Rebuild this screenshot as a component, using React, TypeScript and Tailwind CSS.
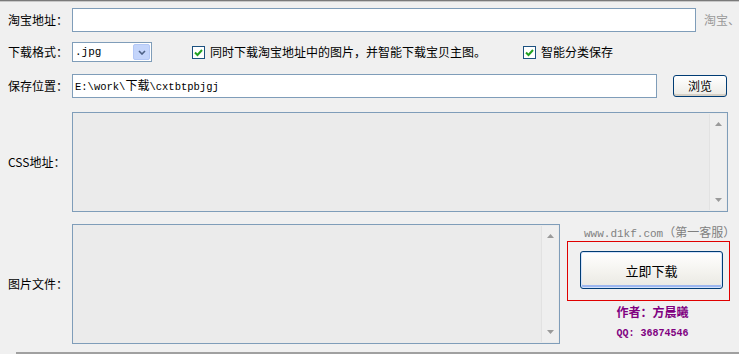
import React from 'react';

const cjk = "font-['Noto_Sans_CJK_SC','Noto_Sans',sans-serif]";
const mono = "font-['Liberation_Mono','Noto_Sans_CJK_SC',monospace]";

const Check: React.FC = () => (
  <div className="w-[13px] h-[13px] border border-[#1c5180] bg-white flex items-center justify-center shrink-0">
    <svg width="9" height="9" viewBox="0 0 9 9">
      <path d="M1 4.5 L3.5 7 L8 2" fill="none" stroke="#21a121" strokeWidth="2" />
    </svg>
  </div>
);

const Label: React.FC<{ text: string }> = ({ text }) => (
  <div className={`w-[72px] pl-[8px] shrink-0 text-[12px] leading-none text-black ${cjk}`}>{text}</div>
);

const ScrollStrip: React.FC = () => (
  <div className="w-[17px] h-full bg-[#efefef] border-l border-[#e2e2e2] flex flex-col items-center justify-between py-[8px]">
    <svg width="7" height="4" viewBox="0 0 7 4"><path d="M0 4 L3.5 0 L7 4 Z" fill="#9a9a9a" /></svg>
    <svg width="7" height="4" viewBox="0 0 7 4"><path d="M0 0 L7 0 L3.5 4 Z" fill="#9a9a9a" /></svg>
  </div>
);

export default function App() {
  return (
    <div className={`w-[739px] h-[354px] bg-[#f0f0f0] overflow-hidden flex flex-col ${cjk}`}>
      <div className="h-[1px] bg-[#7a7a7a]" />
      <div className="h-[1px] bg-[#c8c8c8]" />

      {/* 淘宝地址 */}
      <div className="flex items-center mt-[6px] h-[24px]">
        <Label text="淘宝地址：" />
        <div className="w-[624px] h-[24px] bg-white border border-[#7f9db9] shrink-0" />
        <span className="ml-[8px] text-[12px] text-[#9a9a9a] whitespace-nowrap">淘宝、</span>
      </div>

      {/* 下载格式 */}
      <div className="flex items-center mt-[10px] h-[20px]">
        <Label text="下载格式：" />
        <div className="w-[80px] h-[20px] bg-white border border-[#7f9db9] flex items-center justify-between pl-[2px] pr-[1px] shrink-0">
          <span className={`text-[11px] leading-none text-black ${mono}`}>.jpg</span>
          <div className="w-[17px] h-[16px] bg-[#c4d5fb] border border-[#b4c8f6] rounded-[2px] flex items-center justify-center">
            <svg width="8" height="5" viewBox="0 0 8 5"><path d="M1 1 L4 4 L7 1" fill="none" stroke="#4d6185" strokeWidth="1.6" /></svg>
          </div>
        </div>
        <div className="ml-[40px] flex items-center gap-[5px]">
          <Check />
          <span className="text-[12px] leading-none text-black whitespace-nowrap">同时下载淘宝地址中的图片，并智能下载宝贝主图。</span>
        </div>
        <div className="ml-[37px] flex items-center gap-[5px]">
          <Check />
          <span className="text-[12px] leading-none text-black whitespace-nowrap">智能分类保存</span>
        </div>
      </div>

      {/* 保存位置 */}
      <div className="flex items-center mt-[12px] h-[24px]">
        <Label text="保存位置：" />
        <div className="w-[585px] h-[24px] bg-white border border-[#7f9db9] flex items-center pl-[2px] shrink-0">
          <span className={`text-[10.5px] leading-none text-black whitespace-nowrap ${mono}`}>E:\work\<span className={`text-[12px] ${cjk}`}>下载</span>\cxtbtpbjgj</span>
        </div>
        <button className="ml-[16px] w-[54px] h-[22px] rounded-[3px] border border-[#003c74] bg-gradient-to-b from-white to-[#ecebe6] shadow-[inset_0_-2px_0_#d6d0c5] text-[12px] text-black leading-none flex items-center justify-center">
          浏览
        </button>
      </div>

      {/* CSS地址 */}
      <div className="flex items-center mt-[14px] h-[100px]">
        <Label text="CSS地址：" />
        <div className="w-[656px] h-[100px] bg-[#ebebeb] border border-[#7f9db9] flex justify-end p-[1px] shrink-0">
          <ScrollStrip />
        </div>
      </div>

      {/* 图片文件 */}
      <div className="flex items-center mt-[12px] h-[120px]">
        <Label text="图片文件：" />
        <div className="w-[488px] h-[120px] bg-[#ebebeb] border border-[#7f9db9] flex justify-end p-[1px] shrink-0">
          <ScrollStrip />
        </div>
        <div className="ml-[7px] w-[163px] h-[120px] flex flex-col">
          <div className={`text-[11px] leading-none text-[#808080] whitespace-nowrap pl-[17px] pt-[2px] ${mono}`}>
            www.d1kf.com<span className={`text-[12px] ${cjk}`}>（第一客服）</span>
          </div>
          <div className="mt-[1px] h-[60px] shrink-0 border border-[#e00000] pl-[12px] pt-[9px]">
            <button className="w-[143px] h-[38px] rounded-[3px] border border-[#003c74] bg-gradient-to-b from-white via-[#f5f4f0] to-[#e9e8e2] shadow-[inset_0_0_0_1px_#d4e3fb,inset_0_-2px_0_1px_#9cb6f0] text-[13px] text-black leading-none flex items-center justify-center">
              立即下载
            </button>
          </div>
          <div className="mt-[5px] text-center text-[12px] leading-none font-bold text-[#800080] pl-[8px]">作者：方晨曦</div>
          <div className={`mt-[11px] text-center text-[10px] leading-none font-bold text-[#800080] pl-[8px] ${mono}`}>QQ: 36874546</div>
        </div>
      </div>

      <div className="mt-[8px] ml-[16px] h-[2px] bg-[#a0a0a0]" />
    </div>
  );
}
